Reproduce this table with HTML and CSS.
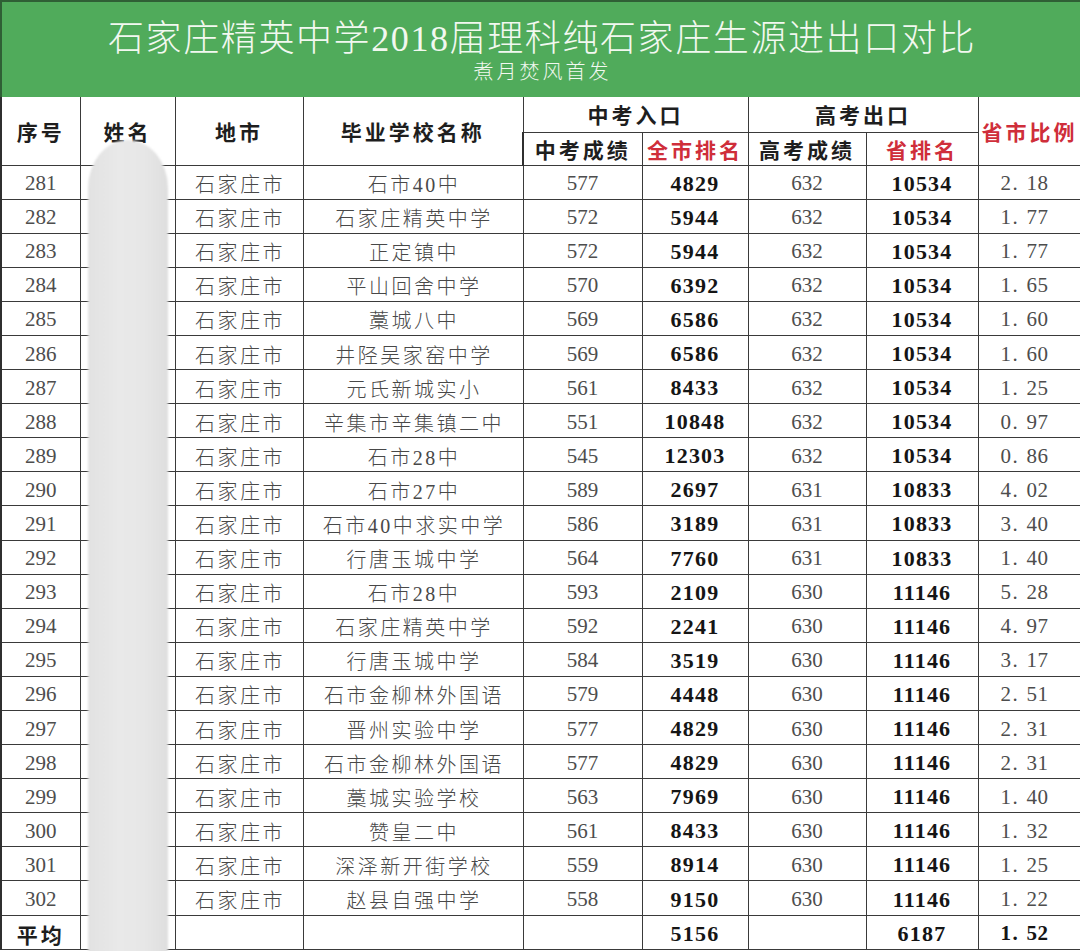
FILE: index.html
```html
<!DOCTYPE html>
<html lang="zh-CN">
<head>
<meta charset="utf-8">
<title>石家庄精英中学2018届理科纯石家庄生源进出口对比</title>
<link rel="stylesheet" href="styles.css">
</head>
<body>
<div class="page">
  <header class="banner">
    <h1 class="title">石家庄精英中学2018届理科纯石家庄生源进出口对比</h1>
    <p class="subtitle">煮月焚风首发</p>
  </header>
  <table class="grid">
    <colgroup>
      <col class="c-no"><col class="c-name"><col class="c-city"><col class="c-school">
      <col class="c-zk"><col class="c-zkr"><col class="c-gk"><col class="c-gkr"><col class="c-ratio">
    </colgroup>
    <thead>
      <tr class="h1">
        <th rowspan="2">序号</th>
        <th rowspan="2">姓名</th>
        <th rowspan="2">地市</th>
        <th rowspan="2">毕业学校名称</th>
        <th colspan="2">中考入口</th>
        <th colspan="2">高考出口</th>
        <th rowspan="2" class="red">省市比例</th>
      </tr>
      <tr class="h2">
        <th>中考成绩</th>
        <th class="red">全市排名</th>
        <th>高考成绩</th>
        <th class="red">省排名</th>
      </tr>
    </thead>
    <tbody>
      <tr><td class="num">281</td><td></td><td class="cjk">石家庄市</td><td class="cjk">石市40中</td><td class="num">577</td><td class="bold">4829</td><td class="num">632</td><td class="bold">10534</td><td class="ratio">2<span class="dot">.</span>18</td></tr>
      <tr><td class="num">282</td><td></td><td class="cjk">石家庄市</td><td class="cjk">石家庄精英中学</td><td class="num">572</td><td class="bold">5944</td><td class="num">632</td><td class="bold">10534</td><td class="ratio">1<span class="dot">.</span>77</td></tr>
      <tr><td class="num">283</td><td></td><td class="cjk">石家庄市</td><td class="cjk">正定镇中</td><td class="num">572</td><td class="bold">5944</td><td class="num">632</td><td class="bold">10534</td><td class="ratio">1<span class="dot">.</span>77</td></tr>
      <tr><td class="num">284</td><td></td><td class="cjk">石家庄市</td><td class="cjk">平山回舍中学</td><td class="num">570</td><td class="bold">6392</td><td class="num">632</td><td class="bold">10534</td><td class="ratio">1<span class="dot">.</span>65</td></tr>
      <tr><td class="num">285</td><td></td><td class="cjk">石家庄市</td><td class="cjk">藁城八中</td><td class="num">569</td><td class="bold">6586</td><td class="num">632</td><td class="bold">10534</td><td class="ratio">1<span class="dot">.</span>60</td></tr>
      <tr><td class="num">286</td><td></td><td class="cjk">石家庄市</td><td class="cjk">井陉吴家窑中学</td><td class="num">569</td><td class="bold">6586</td><td class="num">632</td><td class="bold">10534</td><td class="ratio">1<span class="dot">.</span>60</td></tr>
      <tr><td class="num">287</td><td></td><td class="cjk">石家庄市</td><td class="cjk">元氏新城实小</td><td class="num">561</td><td class="bold">8433</td><td class="num">632</td><td class="bold">10534</td><td class="ratio">1<span class="dot">.</span>25</td></tr>
      <tr><td class="num">288</td><td></td><td class="cjk">石家庄市</td><td class="cjk">辛集市辛集镇二中</td><td class="num">551</td><td class="bold">10848</td><td class="num">632</td><td class="bold">10534</td><td class="ratio">0<span class="dot">.</span>97</td></tr>
      <tr><td class="num">289</td><td></td><td class="cjk">石家庄市</td><td class="cjk">石市28中</td><td class="num">545</td><td class="bold">12303</td><td class="num">632</td><td class="bold">10534</td><td class="ratio">0<span class="dot">.</span>86</td></tr>
      <tr><td class="num">290</td><td></td><td class="cjk">石家庄市</td><td class="cjk">石市27中</td><td class="num">589</td><td class="bold">2697</td><td class="num">631</td><td class="bold">10833</td><td class="ratio">4<span class="dot">.</span>02</td></tr>
      <tr><td class="num">291</td><td></td><td class="cjk">石家庄市</td><td class="cjk">石市40中求实中学</td><td class="num">586</td><td class="bold">3189</td><td class="num">631</td><td class="bold">10833</td><td class="ratio">3<span class="dot">.</span>40</td></tr>
      <tr><td class="num">292</td><td></td><td class="cjk">石家庄市</td><td class="cjk">行唐玉城中学</td><td class="num">564</td><td class="bold">7760</td><td class="num">631</td><td class="bold">10833</td><td class="ratio">1<span class="dot">.</span>40</td></tr>
      <tr><td class="num">293</td><td></td><td class="cjk">石家庄市</td><td class="cjk">石市28中</td><td class="num">593</td><td class="bold">2109</td><td class="num">630</td><td class="bold">11146</td><td class="ratio">5<span class="dot">.</span>28</td></tr>
      <tr><td class="num">294</td><td></td><td class="cjk">石家庄市</td><td class="cjk">石家庄精英中学</td><td class="num">592</td><td class="bold">2241</td><td class="num">630</td><td class="bold">11146</td><td class="ratio">4<span class="dot">.</span>97</td></tr>
      <tr><td class="num">295</td><td></td><td class="cjk">石家庄市</td><td class="cjk">行唐玉城中学</td><td class="num">584</td><td class="bold">3519</td><td class="num">630</td><td class="bold">11146</td><td class="ratio">3<span class="dot">.</span>17</td></tr>
      <tr><td class="num">296</td><td></td><td class="cjk">石家庄市</td><td class="cjk">石市金柳林外国语</td><td class="num">579</td><td class="bold">4448</td><td class="num">630</td><td class="bold">11146</td><td class="ratio">2<span class="dot">.</span>51</td></tr>
      <tr><td class="num">297</td><td></td><td class="cjk">石家庄市</td><td class="cjk">晋州实验中学</td><td class="num">577</td><td class="bold">4829</td><td class="num">630</td><td class="bold">11146</td><td class="ratio">2<span class="dot">.</span>31</td></tr>
      <tr><td class="num">298</td><td></td><td class="cjk">石家庄市</td><td class="cjk">石市金柳林外国语</td><td class="num">577</td><td class="bold">4829</td><td class="num">630</td><td class="bold">11146</td><td class="ratio">2<span class="dot">.</span>31</td></tr>
      <tr><td class="num">299</td><td></td><td class="cjk">石家庄市</td><td class="cjk">藁城实验学校</td><td class="num">563</td><td class="bold">7969</td><td class="num">630</td><td class="bold">11146</td><td class="ratio">1<span class="dot">.</span>40</td></tr>
      <tr><td class="num">300</td><td></td><td class="cjk">石家庄市</td><td class="cjk">赞皇二中</td><td class="num">561</td><td class="bold">8433</td><td class="num">630</td><td class="bold">11146</td><td class="ratio">1<span class="dot">.</span>32</td></tr>
      <tr><td class="num">301</td><td></td><td class="cjk">石家庄市</td><td class="cjk">深泽新开街学校</td><td class="num">559</td><td class="bold">8914</td><td class="num">630</td><td class="bold">11146</td><td class="ratio">1<span class="dot">.</span>25</td></tr>
      <tr><td class="num">302</td><td></td><td class="cjk">石家庄市</td><td class="cjk">赵县自强中学</td><td class="num">558</td><td class="bold">9150</td><td class="num">630</td><td class="bold">11146</td><td class="ratio">1<span class="dot">.</span>22</td></tr>
      <tr class="avg"><td class="label">平均</td><td></td><td></td><td></td><td></td><td class="bold">5156</td><td></td><td class="bold">6187</td><td class="ratio strong">1<span class="dot">.</span>52</td></tr>
    </tbody>
  </table>
  <div class="smudge" aria-hidden="true"></div>
</div>
</body>
</html>
```

FILE: styles.css
```css
html, body {
  margin: 0;
  padding: 0;
  background: #ffffff;
}

.page {
  position: relative;
  width: 1080px;
  height: 951px;
  overflow: hidden;
  font-family: "Liberation Serif", "Noto Sans CJK SC", serif;
}

.banner {
  box-sizing: border-box;
  height: 97px;
  background: #50ab5b;
  border-top: 2px solid #2f5f35;
  border-left: 2px solid #2f5f35;
  padding-top: 17px;
  text-align: center;
  color: #f2f8f0;
}

.title {
  margin: 0;
  font-size: 36px;
  line-height: 40px;
  font-weight: 300;
  letter-spacing: 1.6px;
  padding-left: 2px;
}

.subtitle {
  margin: 0;
  font-size: 20px;
  line-height: 26px;
  font-weight: 300;
  letter-spacing: 3px;
  padding-left: 3px;
}

.grid {
  width: 1080px;
  table-layout: fixed;
  border-collapse: collapse;
  color: #4a4a4a;
}

.c-no { width: 79px; }
.c-name { width: 95px; }
.c-city { width: 128px; }
.c-school { width: 220px; }
.c-zk { width: 119px; }
.c-zkr { width: 106px; }
.c-gk { width: 118px; }
.c-gkr { width: 112px; }
.c-ratio { width: 103px; }

.grid th,
.grid td {
  border: 1px solid #3a3a3a;
  padding: 0;
  text-align: center;
  vertical-align: middle;
  white-space: nowrap;
  overflow: hidden;
}

.grid tbody td { padding-top: 3px; }

.grid th {
  font-family: "Noto Sans CJK SC", sans-serif;
  font-weight: 700;
  font-size: 21px;
  letter-spacing: 3px;
  color: #1e1e1e;
}

.grid tr:first-child th,
.grid tr:first-child td { border-top: none; }

.grid tr > :first-child { border-left: 2px solid #2f2f2f; }

.h1 { height: 35px; }
.h2 { height: 33px; }

.grid th.red { color: #cf2e3a; }

.grid tbody tr { height: 34.1px; }

.grid td.num {
  font-size: 21px;
  color: #4d4d4d;
}

.grid td.cjk {
  font-size: 20px;
  font-weight: 300;
  letter-spacing: 2.5px;
  padding-left: 2px;
  color: #484848;
}

.grid td.bold {
  font-size: 22px;
  font-weight: 700;
  letter-spacing: 1.2px;
  color: #151515;
}

.grid td.ratio {
  font-size: 21px;
  letter-spacing: 0.5px;
  padding-right: 10px;
  color: #4d4d4d;
}

.grid td.ratio.strong {
  font-weight: 700;
  color: #151515;
}

.dot {
  display: inline-block;
  width: 14px;
  text-align: left;
  padding-left: 1px;
}

.grid td.label {
  font-family: "Noto Sans CJK SC", sans-serif;
  font-weight: 700;
  font-size: 21px;
  letter-spacing: 3px;
  color: #1e1e1e;
}

.smudge {
  position: absolute;
  left: 88px;
  top: 140px;
  width: 80px;
  height: 830px;
  border-radius: 40px 40px 6px 6px / 48px 48px 6px 6px;
  background: linear-gradient(90deg, #e2e2e2 0%, #e9e9e9 40%, #e7e7e7 70%, #dedede 100%);
  filter: blur(1.2px);
}
```
